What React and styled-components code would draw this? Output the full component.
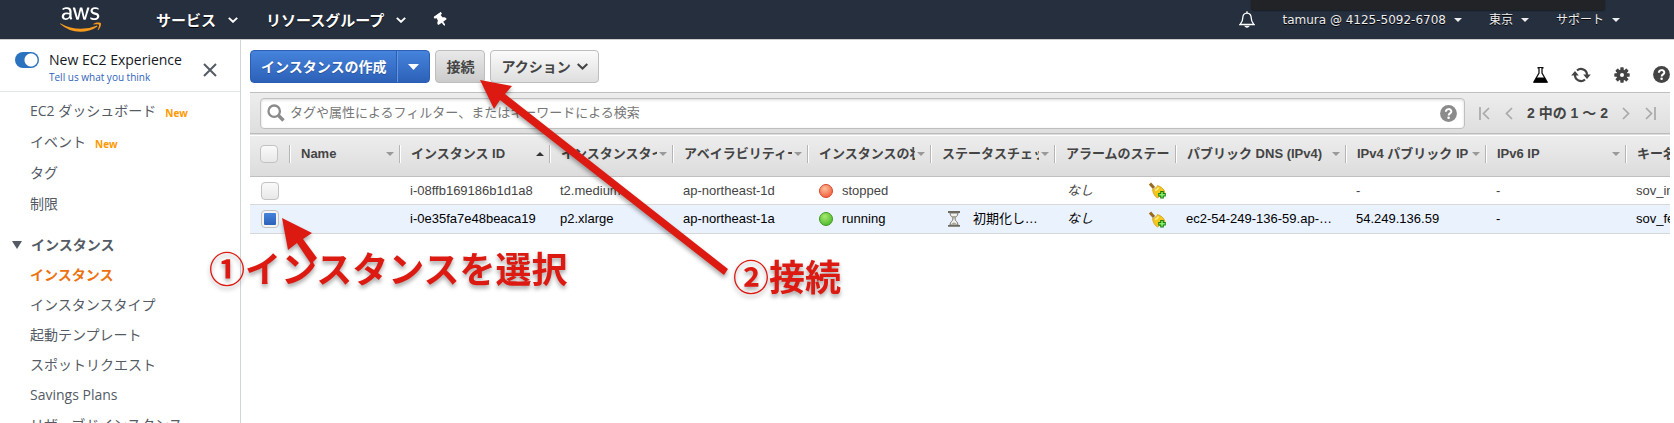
import React from "react";
import styled, { createGlobalStyle, css } from "styled-components";
import { FaAws, FaThumbtack } from "react-icons/fa";

const jp = `"Noto Sans CJK JP", sans-serif`;

const GlobalStyle = createGlobalStyle`
  * { box-sizing: border-box; }
  body { margin: 0; background: #fff; color: #444; font: 13px/20px "Liberation Sans", ${jp}; }
  button, input { font: inherit; color: inherit; }
  button { padding: 0; border: 0; background: none; cursor: pointer; }
  svg { display: block; flex: none; }
`;

const Shell = styled.div`
  position: relative;
  display: flex;
  flex-direction: column;
  height: 100vh;
  overflow: hidden;
`;

/* ---------- top navigation ---------- */

const TopNav = styled.header`
  display: flex;
  align-items: center;
  justify-content: space-between;
  flex: none;
  height: 40px;
  padding: 0 54px 0 60px;
  background: #262f3e;
  border-bottom: 1px solid #ccc;
  color: #fff;
`;

const NavGroup = styled.nav`
  display: flex;
  align-items: center;
  gap: ${(p) => p.$gap}px;
`;

const Logo = styled.a`
  display: block;
  margin-right: 27px;
`;

const NavButton = styled.button`
  display: flex;
  align-items: center;
  gap: ${(p) => (p.$small ? 8 : 12)}px;
  color: ${(p) => (p.$small ? "#eee" : "#fff")};
  font: ${(p) =>
    p.$small ? `12px/20px "DejaVu Sans", ${jp}` : `bold 15px/20px "Open Sans", ${jp}`};
  text-shadow: 0 1px 0 #000;
`;

const DarkTab = styled.div`
  position: absolute;
  top: 0;
  right: 69px;
  width: 354px;
  height: 10px;
  border-radius: 0 0 3px 3px;
  background: #222326;
  box-shadow: 0 1px 2px rgba(0, 0, 0, 0.4);
`;

/* ---------- sidebar ---------- */

const Body = styled.div`
  display: flex;
  flex: 1;
  min-height: 0;
`;

const Sidebar = styled.aside`
  flex: none;
  width: 241px;
  overflow: hidden;
  border-right: 1px solid #d0d7dc;
  color: #545b64;
  font: 14px/20px "Open Sans", ${jp};
`;

const Experience = styled.div`
  display: flex;
  align-items: flex-start;
  height: 52px;
  padding: 10px 23px 0 15px;
  border-bottom: 1px solid #e3e7e7;
`;

const Switch = styled.input`
  appearance: none;
  width: 24px;
  height: 16px;
  margin: 2px 10px 0 0;
  border-radius: 8px;
  background: radial-gradient(circle at 16px 8px, #fff 6px, #2c73bf 7px);
`;

const ExperienceText = styled.div`
  flex: 1;
  color: #16191f;
  line-height: 20px;
`;

const Feedback = styled.a`
  display: block;
  color: #2f63ba;
  font-size: 10px;
  line-height: 14px;
  text-decoration: none;
`;

const CloseButton = styled.button`
  margin-top: 13px;
  color: #545b64;
`;

const NavList = styled.ul`
  margin: 0;
  padding: ${(p) => (p.$first ? "3px 0 11px" : 0)};
  list-style: none;
`;

const NavItem = styled.li`
  display: flex;
  align-items: center;
  height: ${(p) => (p.$tall ? 31 : 30)}px;
  padding-left: 30px;
  white-space: nowrap;
`;

const NavLink = styled.a`
  color: ${(p) => (p.$active ? "#ec7211" : "#545b64")};
  font-weight: ${(p) => (p.$active ? 700 : 400)};
  text-decoration: none;
`;

const NewTag = styled.span`
  margin: 4px 0 0 9px;
  color: #ff9900;
  font-size: 10px;
  font-weight: 700;
  line-height: 16px;
`;

const SectionToggle = styled.button`
  display: flex;
  align-items: center;
  gap: 9px;
  height: 30px;
  padding-left: 12px;
  font-weight: 700;
`;

/* ---------- main panel ---------- */

const Main = styled.main`
  flex: 1;
  min-width: 0;
  padding: 0 4px 0 9px;
`;

const Toolbar = styled.div`
  display: flex;
  gap: 5px;
  height: 52px;
  padding: 10px 0 9px;
`;

const ToolIcons = styled.div`
  display: flex;
  align-items: center;
  align-self: flex-end;
  gap: 23px;
  margin: 0 0 0 auto;
  color: #444;
`;

const frame = css`
  border: 1px solid #bdbdbd;
  border-radius: 4px;
  background: linear-gradient(#fbfbfb, #dedede);
`;

const GreyButton = styled.button`
  ${frame}
  display: flex;
  align-items: center;
  gap: 6px;
  padding: 0 10px;
  font-size: 14px;
  font-weight: 700;
  ${(p) => p.$pressed && "background: linear-gradient(#e9e9e9, #cbcbcb);"}
`;

const SplitButton = styled.div`
  display: flex;
  border: 1px solid #2b5fb3;
  border-radius: 4px;
  background: linear-gradient(#4583dc, #2d61b8);
  overflow: hidden;
`;

const BlueButton = styled.button`
  display: grid;
  place-items: center;
  padding: 0 10px;
  color: #fff;
  font-size: 14px;
  font-weight: 700;
  text-shadow: 0 1px 0 #244f97;
  & + & {
    width: 33px;
    border-left: 1px solid #2a5cb0;
    box-shadow: inset 1px 0 0 #6396e0;
  }
`;

const FilterBar = styled.div`
  display: flex;
  align-items: center;
  gap: 14px;
  height: 41px;
  padding: 0 14px 0 10px;
  border-top: 1px solid #bfbfbf;
  background: linear-gradient(#ededed, #dedede);
`;

const SearchBox = styled.label`
  display: flex;
  flex: 1;
  align-items: center;
  gap: 5px;
  height: 31px;
  padding: 0 7px 0 6px;
  border: 1px solid #bfbfbf;
  border-radius: 4px;
  background: #fff;
  box-shadow: inset 0 1px 3px rgba(0, 0, 0, 0.15);
`;

const SearchInput = styled.input`
  flex: 1;
  min-width: 0;
  padding: 0;
  border: 0;
  outline: 0;
  background: none;
  &::placeholder { color: #777; opacity: 1; }
`;

const Pager = styled.div`
  display: flex;
  align-items: center;
  justify-content: space-between;
  width: 177px;
  font-size: 14px;
  font-weight: 700;
  white-space: nowrap;
`;

const Table = styled.table`
  width: 100%;
  table-layout: fixed;
  border-collapse: collapse;
`;

const HeadRow = styled.tr`
  height: 43px;
  background: linear-gradient(#fff 0 1px, #ededed 1px, #dcdcdc);
  border-top: 1px solid #bcbcbc;
  border-bottom: 1px solid #bfbfbf;
`;

const HeadCell = styled.th`
  padding: 0 0 2px;
  overflow: hidden;
  text-align: left;
`;

const HeadInner = styled.div`
  display: flex;
  align-items: center;
  gap: 2px;
  height: 18px;
  padding: ${(p) => (p.$check ? "0 0 0 10px" : p.$last ? "0 0 0 10px" : "0 6px 0 10px")};
  white-space: nowrap;
  ${(p) =>
    !p.$last &&
    css`
      border-right: 1px solid #fff;
      box-shadow: inset -1px 0 0 #b5b5b5;
    `}
`;

const HeadText = styled.span`
  flex: 1;
  min-width: 0;
  overflow: hidden;
`;

const Row = styled.tr`
  height: ${(p) => (p.$selected ? 29 : 28)}px;
  border-bottom: 1px solid #d8d8d8;
  background: ${(p) => (p.$selected ? "#eaf2fe" : "#fff")};
  color: ${(p) => (p.$selected ? "#000" : "#444")};
`;

const Cell = styled.td`
  height: 27px;
  padding: 0 9px;
  overflow: hidden;
  white-space: nowrap;
  text-overflow: ${(p) => (p.$cut ? "clip" : "ellipsis")};
`;

const IconText = styled.div`
  display: flex;
  align-items: center;
  gap: ${(p) => p.$gap || 9}px;
  padding-left: ${(p) => p.$inset || 1}px;
`;

const Ellipsis = styled.span`
  overflow: hidden;
  text-overflow: ellipsis;
`;

const Dot = styled.span`
  width: 14px;
  height: 14px;
  border-radius: 50%;
  ${(p) =>
    p.$running
      ? "border: 1px solid #3f9a22; background: radial-gradient(circle at 40% 30%, #a5ea6e, #3fae22);"
      : "border: 1px solid #d8472b; background: radial-gradient(circle at 40% 30%, #ffc09a, #ee4a2a);"}
`;

const AlarmCell = styled.div`
  display: flex;
  align-items: center;
  justify-content: space-between;
  padding: 0 2px;
`;

const Check = styled.input`
  ${frame}
  appearance: none;
  display: block;
  width: 18px;
  height: 18px;
  margin: ${(p) => (p.$row ? "0 0 0 2px" : 0)};
  border-color: #c2c2c2;
  background: linear-gradient(#fafafa, #e8e8e8);
  &:checked {
    background: linear-gradient(#4583dc, #2d61b8) content-box, #f4f4f4;
    padding: 2px;
  }
`;

/* ---------- call-outs ---------- */

const Callouts = styled.div`
  position: absolute;
  inset: 0;
  pointer-events: none;
  color: #dc1a12;
  filter: drop-shadow(0 3px 2px rgba(0, 0, 0, 0.35));
`;

const Note = styled.span`
  position: absolute;
  left: ${(p) => p.$x}px;
  top: ${(p) => p.$y}px;
  font: bold 36px/40px ${jp};
  white-space: nowrap;
`;

const Arrows = styled.svg`
  position: absolute;
  left: 0;
  top: 0;
`;

/* ---------- drawings ---------- */

const Chevron = ({ w = 8, h = 5, sw = 2 }) => (
  <svg width={w} height={h} viewBox="0 0 8 5" fill="none" stroke="currentColor" strokeWidth={sw}>
    <path d="M.5 .7 4 4 7.5 .7" />
  </svg>
);

const Triangle = ({ w, h, up, color = "currentColor" }) => (
  <svg width={w} height={h} viewBox="0 0 10 6" preserveAspectRatio="none" fill={color}>
    <path d={up ? "M0 6h10L5 0z" : "M0 0h10L5 6z"} />
  </svg>
);

const AwsLogo = () => (
  <>
    <svg width="0" height="0" style={{ position: "absolute" }}>
      <linearGradient id="logoFill" x1="0" y1="0" x2="0" y2="1">
        <stop offset=".59" stopColor="#fff" />
        <stop offset=".59" stopColor="#f79a1c" />
      </linearGradient>
    </svg>
    <FaAws size={41} fill="url(#logoFill)" aria-label="aws" />
  </>
);

const BellOutline = () => (
  <svg width="16" height="18" viewBox="0 0 16 18" fill="none" stroke="#fff" strokeWidth="1.3">
    <path d="M8 2.2c-2.8 0-4.2 2-4.2 4.6 0 4-1.2 5-2.8 6.700h14c-1.600-1.700-2.800-2.700-2.800-6.700 0-2.600-1.400-4.600-4.200-4.600z" />
    <path d="M8 .3v2M6.500 15.300q1.500 1.600 3 0z" />
  </svg>
);

const Flask = () => (
  <svg width="15" height="16" viewBox="0 0 15 16">
    <path d="M4.500 .8h6" stroke="#111" strokeWidth="1.600" />
    <path d="M6 1v5L1 14.800h13L9 6V1" fill="#fff" stroke="#111" strokeWidth="1.300" />
    <path d="M3.500 10.500h8l3.200 5.300H.3z" fill="#000" />
  </svg>
);

const Refresh = () => (
  <svg width="20" height="16" viewBox="0 0 20 16" fill="none" stroke="currentColor" strokeWidth="2.200">
    <path d="M6 3.500A6 6 0 0 1 16 8M14 12.500A6 6 0 0 1 4 8" />
    <path d="M12.200 7.500h7.600L16 12zM.2 8.500h7.600L4 4z" fill="currentColor" stroke="none" />
  </svg>
);

const Gear = () => (
  <svg width="16" height="16" viewBox="-8 -8 16 16" fill="currentColor">
    {[0, 45, 90, 135].map((a) => (
      <rect key={a} x="-1.700" y="-7.700" width="3.400" height="15.400" rx=".6" transform={`rotate(${a})`} />
    ))}
    <circle r="5.600" />
    <circle r="2" fill="#fff" />
  </svg>
);

const Help = ({ color = "#444" }) => (
  <svg width="17" height="17" viewBox="0 0 17 17">
    <circle cx="8.500" cy="8.500" r="8.400" fill={color} />
    <path d="M5.900 6.800c0-3.600 5.400-3.400 5.400-.4 0 2-2.600 1.900-2.600 4" fill="none" stroke="#fff" strokeWidth="2" />
    <circle cx="8.600" cy="12.700" r="1.300" fill="#fff" />
  </svg>
);

const Magnifier = () => (
  <svg width="18" height="18" viewBox="0 0 18 18" fill="none" stroke="#8b8b8b">
    <circle cx="7.200" cy="7.200" r="5.700" strokeWidth="2.300" />
    <path d="M11.500 11.500l5 5" strokeWidth="3.400" />
  </svg>
);

const PageArrow = ({ end, flip }) => (
  <svg
    width={end ? 11 : 8}
    height="13"
    viewBox={end ? "0 0 11 13" : "3 0 8 13"}
    fill="none"
    stroke="#a9a9a9"
    strokeWidth="1.700"
    transform={flip ? "scale(-1 1)" : undefined}
  >
    <path d="M10 1 4.500 6.500 10 12" />
    {end && <path d="M1 0v13" />}
  </svg>
);

const Hourglass = () => (
  <svg width="12" height="16" viewBox="0 0 12 16">
    <path d="M2 2c0 3.500 3 4 3 6s-3 2.500-3 6h8c0-3.500-3-4-3-6s3-2.500 3-6z" fill="#f1f1ec" stroke="#777" />
    <path d="M3.500 5h5L6 8zM3 13.500q3-4 6 0z" fill="#a9a796" />
    <path d="M0 1h12M0 14.800h12" stroke="#6d6a5f" strokeWidth="1.800" />
  </svg>
);

const AlarmBell = () => (
  <svg width="17" height="17" viewBox="0 0 17 17">
    <path d="M1 1.500 5 6" stroke="#9a6a1c" strokeWidth="3" />
    <path d="M3.500 7.500C6 7 8 5 8.500 3.500c3 1 6.500 3 7.500 7L8.500 16C5.500 14.500 4 11 3.500 7.500z" fill="#f5c71c" stroke="#c99712" strokeWidth=".7" />
    <path d="M6 8.500c2-.5 3-1.500 3.500-3" stroke="#ffef8a" strokeWidth="1.500" fill="none" />
    <path d="M13 9v7.500M9.200 12.800h7.600" stroke="#12800f" strokeWidth="3.600" />
    <path d="M13 10v5.500M10.200 12.800h5.600" stroke="#8cf06a" strokeWidth="1.500" />
  </svg>
);

/* ---------- data ---------- */

const resourceLinks = [
  { label: "EC2 ダッシュボード", isNew: true },
  { label: "イベント", isNew: true },
  { label: "タグ" },
  { label: "制限" },
];

const instanceLinks = [
  "インスタンス",
  "インスタンスタイプ",
  "起動テンプレート",
  "スポットリクエスト",
  "Savings Plans",
  "リザーブドインスタンス",
];

const columns = [
  { label: "Name", width: 110, sort: "down" },
  { label: "インスタンス ID", width: 150, sort: "up" },
  { label: "インスタンスタイプ", width: 123, sort: "down" },
  { label: "アベイラビリティーゾーン", width: 135, sort: "down" },
  { label: "インスタンスの状態", width: 123, sort: "down" },
  { label: "ステータスチェック", width: 124, sort: "down" },
  { label: "アラームのステータス", width: 121 },
  { label: "パブリック DNS (IPv4)", width: 170, sort: "down" },
  { label: "IPv4 パブリック IP", width: 140, sort: "down" },
  { label: "IPv6 IP", width: 140, sort: "down" },
  { label: "キー名" },
];

const instances = [
  { id: "i-08ffb169186b1d1a8", type: "t2.medium", zone: "ap-northeast-1d", state: "stopped", dns: "", ip: "-", key: "sov_instance" },
  {
    id: "i-0e35fa7e48beaca19",
    type: "p2.xlarge",
    zone: "ap-northeast-1a",
    state: "running",
    check: "初期化しています",
    dns: "ec2-54-249-136-59.ap-northeast-1.compute.amazonaws.com",
    ip: "54.249.136.59",
    key: "sov_fe_key",
    selected: true,
  },
];

export default function App() {
  return (
    <Shell>
      <GlobalStyle />
      <TopNav>
        <NavGroup $gap={28}>
          <Logo href="#"><AwsLogo /></Logo>
          <NavButton>サービス<Chevron w={10} h={6} sw={1.6} /></NavButton>
          <NavButton>リソースグループ<Chevron w={10} h={6} sw={1.6} /></NavButton>
          <NavButton aria-label="ピン留め"><FaThumbtack size={14} style={{ transform: "rotate(-35deg)" }} /></NavButton>
        </NavGroup>
        <NavGroup $gap={27}>
          <NavButton $small aria-label="通知"><BellOutline /></NavButton>
          <NavButton $small>tamura @ 4125-5092-6708<Triangle w={8} h={4} /></NavButton>
          <NavButton $small>東京<Triangle w={8} h={4} /></NavButton>
          <NavButton $small>サポート<Triangle w={8} h={4} /></NavButton>
        </NavGroup>
      </TopNav>
      <DarkTab />

      <Body>
        <Sidebar>
          <Experience>
            <Switch type="checkbox" role="switch" id="experience" defaultChecked />
            <ExperienceText>
              <label htmlFor="experience">New EC2 Experience</label>
              <Feedback href="#">Tell us what you think</Feedback>
            </ExperienceText>
            <CloseButton aria-label="閉じる">
              <svg width="14" height="14" viewBox="0 0 14 14" stroke="currentColor" strokeWidth="2">
                <path d="M1 1l12 12M13 1 1 13" />
              </svg>
            </CloseButton>
          </Experience>
          <NavList $first>
            {resourceLinks.map((l) => (
              <NavItem key={l.label} $tall>
                <NavLink href="#">{l.label}</NavLink>
                {l.isNew && <NewTag>New</NewTag>}
              </NavItem>
            ))}
          </NavList>
          <SectionToggle><Triangle w={10} h={8} />インスタンス</SectionToggle>
          <NavList>
            {instanceLinks.map((l, i) => (
              <NavItem key={l}><NavLink href="#" $active={i === 0}>{l}</NavLink></NavItem>
            ))}
          </NavList>
        </Sidebar>

        <Main>
          <Toolbar>
            <SplitButton>
              <BlueButton>インスタンスの作成</BlueButton>
              <BlueButton aria-label="その他"><Triangle w={11} h={6} /></BlueButton>
            </SplitButton>
            <GreyButton $pressed>接続</GreyButton>
            <GreyButton>アクション<Chevron w={11} h={7} sw={1.5} /></GreyButton>
            <ToolIcons>
              <button aria-label="実験"><Flask /></button>
              <button aria-label="更新"><Refresh /></button>
              <button aria-label="設定"><Gear /></button>
              <button aria-label="ヘルプ"><Help /></button>
            </ToolIcons>
          </Toolbar>

          <FilterBar>
            <SearchBox>
              <Magnifier />
              <SearchInput placeholder="タグや属性によるフィルター、またはキーワードによる検索" />
              <Help color="#8b8b8b" />
            </SearchBox>
            <Pager>
              <button aria-label="最初"><PageArrow end /></button>
              <button aria-label="前へ"><PageArrow /></button>
              <span>2 中の 1 〜 2</span>
              <button aria-label="次へ"><PageArrow flip /></button>
              <button aria-label="最後"><PageArrow end flip /></button>
            </Pager>
          </FilterBar>

          <Table>
            <colgroup>
              <col width="41" />
              {columns.map((c) => <col key={c.label} width={c.width} />)}
            </colgroup>
            <thead>
              <HeadRow>
                <HeadCell>
                  <HeadInner $check><Check type="checkbox" aria-label="すべて選択" /></HeadInner>
                </HeadCell>
                {columns.map((c) => (
                  <HeadCell key={c.label}>
                    <HeadInner $last={!c.width}>
                      <HeadText>{c.label}</HeadText>
                      {c.sort && (
                        <Triangle w={8} h={4} up={c.sort === "up"} color={c.sort === "up" ? "#333" : "#999"} />
                      )}
                    </HeadInner>
                  </HeadCell>
                ))}
              </HeadRow>
            </thead>
            <tbody>
              {instances.map((r) => (
                <Row key={r.id} $selected={r.selected}>
                  <Cell><Check $row type="checkbox" aria-label={r.id} defaultChecked={r.selected} /></Cell>
                  <Cell />
                  <Cell>{r.id}</Cell>
                  <Cell>{r.type}</Cell>
                  <Cell>{r.zone}</Cell>
                  <Cell><IconText><Dot $running={r.state === "running"} />{r.state}</IconText></Cell>
                  <Cell>
                    {r.check && (
                      <IconText $gap={13} $inset={7}><Hourglass /><Ellipsis>{r.check}</Ellipsis></IconText>
                    )}
                  </Cell>
                  <Cell><AlarmCell><i>なし</i><AlarmBell /></AlarmCell></Cell>
                  <Cell>{r.dns}</Cell>
                  <Cell>{r.ip}</Cell>
                  <Cell>-</Cell>
                  <Cell $cut>{r.key}</Cell>
                </Row>
              ))}
            </tbody>
          </Table>
        </Main>
      </Body>

      <Callouts>
        <Arrows width="760" height="300" fill="currentColor">
          <path d="M282 218 312 233 303 239 317 258 311 264 297 243 288 250z" />
          <path d="M480 80 512 86 505 94 728 269 724 275 500 100 494 109z" />
        </Arrows>
        <Note $x={209} $y={247}>①インスタンスを選択</Note>
        <Note $x={733} $y={255}>②接続</Note>
      </Callouts>
    </Shell>
  );
}
